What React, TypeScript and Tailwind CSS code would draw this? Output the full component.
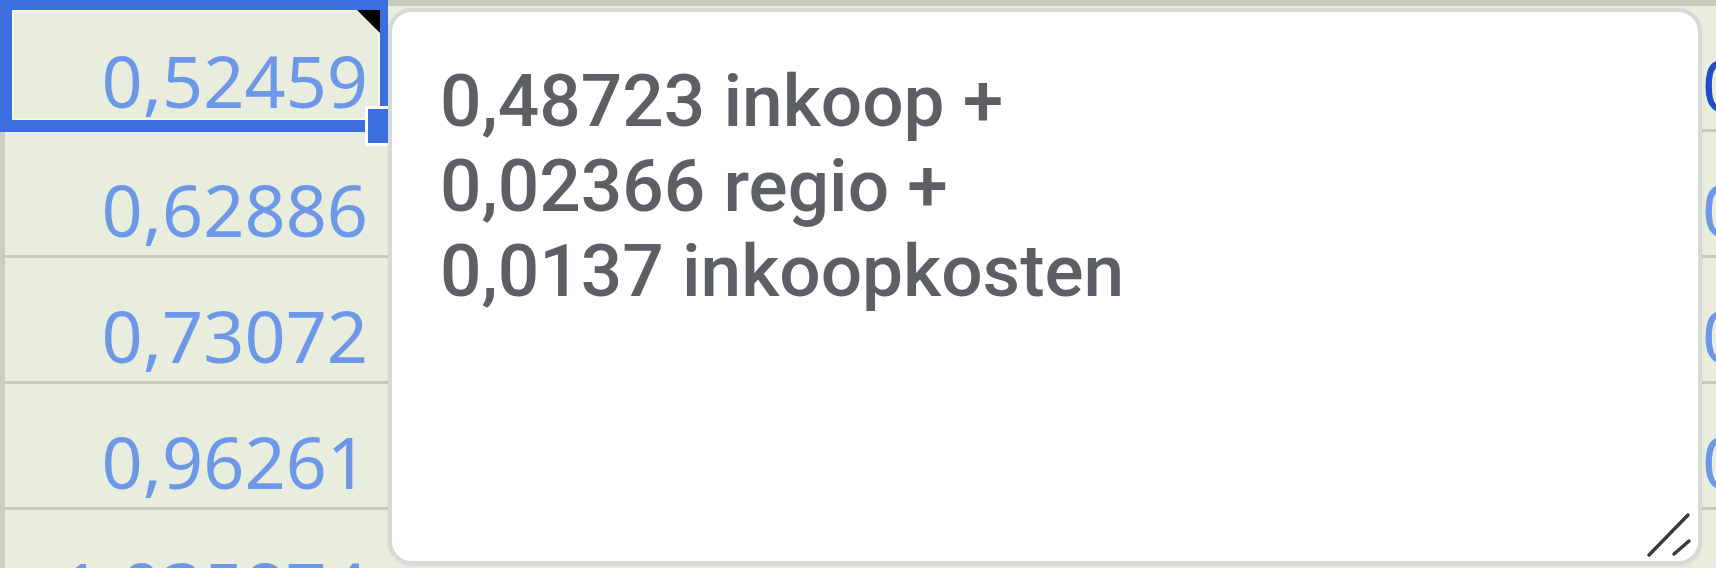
const colA = ["0,52459", "0,62886", "0,73072", "0,96261", "1,035874"];
const colC = ["0,51380", "0,61807", "0,71993", "0,95182", "1,02508"];

const numFont = "font-['Noto_Sans',sans-serif] text-[72px] leading-none whitespace-nowrap";

function ResizeGrip() {
  return (
    <svg
      className="absolute right-0 bottom-0 h-[52px] w-[52px]"
      viewBox="0 0 52 52"
      fill="none"
      stroke="#3a3a3a"
      strokeWidth={3.5}
      strokeLinecap="round"
    >
      <line x1="42" y1="6" x2="3" y2="46" />
      <line x1="43" y1="32" x2="28" y2="45" />
    </svg>
  );
}

function NoteCard() {
  return (
    <div className="absolute left-[388px] top-[8px] h-[557px] w-[1314px] rounded-[24px] border-4 border-[#d7d9d6] bg-white pl-[48px] pt-[47px] shadow-[0_1px_3px_rgba(0,0,0,0.08)]">
      <p className="font-['Roboto',sans-serif] text-[73px] font-medium leading-[85px] text-[#5c6064]">
        0,48723 inkoop +
        <br />
        0,02366 regio +
        <br />
        0,0137 inkoopkosten
      </p>
      <ResizeGrip />
    </div>
  );
}

function SelectedCell({ value }: { value: string }) {
  return (
    <div className="h-[132px] border-t-[10px] border-r-[8px] border-b-[12px] border-l-[12px] border-[#3b6fe0]">
      <div className="relative flex h-full items-end justify-end pr-[12px] pb-[4px] shadow-[inset_0_0_0_2px_#fbf7d2]">
        <span className={`${numFont} text-[#6d98e8]`}>{value}</span>
        {/* note marker */}
        <svg className="absolute top-0 right-0 h-[23px] w-[23px]" viewBox="0 0 23 23">
          <polygon points="0,0 23,0 23,23" fill="#000" />
        </svg>
      </div>
    </div>
  );
}

function Cell({ value }: { value: string }) {
  return (
    <div className="flex h-[126px] items-end justify-end border-b-[3px] border-l-[5px] border-b-[#c8ccbd] border-l-[#cbcfc1] pr-[20px] pb-[10px]">
      <span className={`${numFont} text-[#6d98e8]`}>{value}</span>
    </div>
  );
}

export default function App() {
  return (
    <div className="relative h-[568px] w-[1716px] overflow-hidden bg-[#e9edde]">
      <div className="flex">
        {/* column A */}
        <div className="flex w-[388px] shrink-0 flex-col">
          <SelectedCell value={colA[0]} />
          {colA.slice(1).map((v) => (
            <Cell key={v} value={v} />
          ))}
        </div>

        {/* column B, under the note */}
        <div className="flex w-[1314px] shrink-0 flex-col">
          <div className="h-[132px] border-t-[6px] border-b-[3px] border-[#c8ccbd]" />
          {[0, 1, 2, 3].map((i) => (
            <div key={i} className="h-[126px] border-b-[3px] border-[#c8ccbd]" />
          ))}
        </div>

        {/* column C, clipped at the window edge */}
        <div className="flex min-w-0 flex-1 flex-col overflow-hidden">
          <div className="flex h-[132px] items-end border-t-[6px] border-b-[3px] border-[#c8ccbd] pb-[9px]">
            <span className={`${numFont} text-[#1f4bcc]`}>{colC[0]}</span>
          </div>
          {colC.slice(1).map((v) => (
            <div key={v} className="flex h-[126px] items-end border-b-[3px] border-[#c8ccbd] pb-[10px]">
              <span className={`${numFont} text-[#6d98e8]`}>{v}</span>
            </div>
          ))}
        </div>
      </div>

      {/* fill handle */}
      <div className="absolute left-[365px] top-[106px] h-[40px] w-[40px] border-[3px] border-white bg-[#3b6fe0]" />

      <NoteCard />
    </div>
  );
}
